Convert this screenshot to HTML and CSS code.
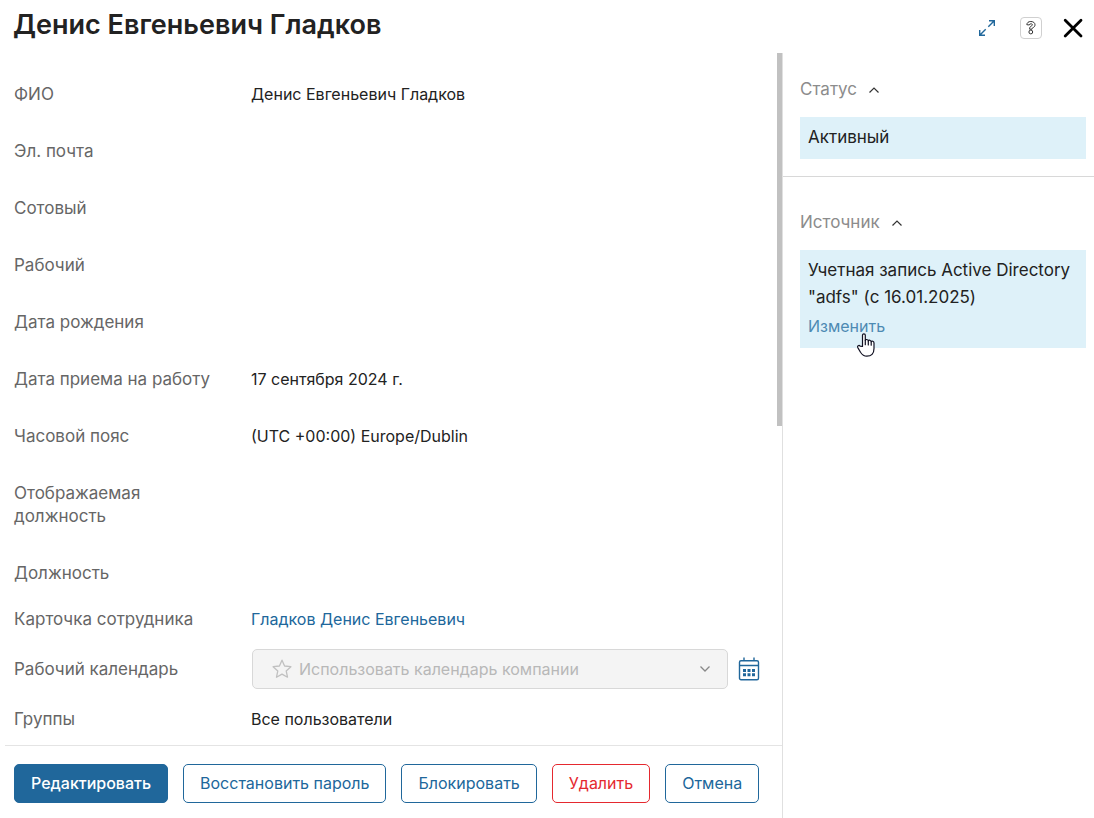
FILE: index.html
```html
<!DOCTYPE html>
<html lang="ru">
<head>
<meta charset="utf-8">
<meta name="viewport" content="width=device-width, initial-scale=1">
<title>Денис Евгеньевич Гладков</title>
<link rel="stylesheet" href="styles.css">
</head>
<body>
<div class="dialog">
  <header class="header">
    <h1 class="title">Денис Евгеньевич Гладков</h1>
    <div class="tools">
      <button class="tool" type="button" aria-label="Развернуть">
        <svg width="18" height="18" viewBox="0 0 18 18" fill="none" stroke="#20679b" stroke-width="1.4"><path d="M10.3 7.700 16 2M11 1.700h5.300v5.300M7.700 10.300 2 16M1.700 11v5.300h5.300"/></svg>
      </button>
      <button class="tool tool-help" type="button" aria-label="Справка">
        <svg width="12" height="16" viewBox="0 0 12 16" fill="#fff" stroke="#333" stroke-width="1"><path d="M1.800 4.700C2 2.600 3.500 1.500 5.800 1.500c2.500 0 4.200 1.300 4.200 3.300 0 1.500-.8 2.300-2.200 3-.6.300-.8.600-.8 1.400H4.600c0-1.700.3-2.400 1.700-3.200.8-.4 1.100-.7 1.100-1.200 0-.7-.6-1-1.500-1S4.500 4.300 4.300 5z"/><circle cx="5.800" cy="12" r="1.900"/></svg>
      </button>
      <button class="tool" type="button" aria-label="Закрыть">
        <svg width="20" height="20" viewBox="0 0 20 20" fill="none" stroke="#000" stroke-width="2.800" stroke-linecap="round"><path d="M2.200 2.200 18 18M18 2.200 2.200 18"/></svg>
      </button>
    </div>
  </header>

  <div class="columns">
    <main class="main">
      <div class="content">
        <dl class="fields">
          <div class="field"><dt>ФИО</dt><dd>Денис Евгеньевич Гладков</dd></div>
          <div class="field"><dt>Эл. почта</dt><dd></dd></div>
          <div class="field"><dt>Сотовый</dt><dd></dd></div>
          <div class="field"><dt>Рабочий</dt><dd></dd></div>
          <div class="field"><dt>Дата рождения</dt><dd></dd></div>
          <div class="field"><dt>Дата приема на работу</dt><dd>17 сентября 2024 г.</dd></div>
          <div class="field"><dt>Часовой пояс</dt><dd>(UTC +00:00) Europe/Dublin</dd></div>
          <div class="field"><dt>Отображаемая<br>должность</dt><dd></dd></div>
          <div class="field"><dt>Должность</dt><dd></dd></div>
        </dl>
        <dl class="fields fields-compact">
          <div class="field"><dt>Карточка сотрудника</dt><dd><a class="link" href="#">Гладков Денис Евгеньевич</a></dd></div>
          <div class="field">
            <dt><label for="calendar">Рабочий календарь</label></dt>
            <dd class="calendar">
              <span class="picker">
                <select id="calendar" class="select" disabled><option>Использовать календарь компании</option></select>
                <svg class="picker-star" width="20" height="20" viewBox="0 0 20 20" fill="none" stroke="#c0c0c0" stroke-width="1.300" stroke-linejoin="round"><path d="M10 1.200 12.600 7 18.900 7.700 14.200 11.900 15.500 18.200 10 15.100 4.500 18.200 5.800 11.900 1.100 7.700 7.400 7z"/></svg>
                <svg class="picker-arrow" width="12" height="8" viewBox="0 0 12 8" fill="none" stroke="#888" stroke-width="1.300"><path d="M1.500 1.500 6 6l4.500-4.500"/></svg>
              </span>
              <button class="tool" type="button" aria-label="Открыть календарь">
                <svg width="22" height="24" viewBox="0 0 22 24" fill="none" stroke="#20679b" stroke-width="1.400"><rect x="1.500" y="3.700" width="19" height="19" rx="1.500"/><path d="M1.500 8.500h19M6 .5v3.500M16 .5v3.500"/><path d="M5 13.500h3M9.500 13.500h3M14 13.500h3M5 17.700h3M9.500 17.700h3M14 17.700h3" stroke-width="3"/></svg>
              </button>
            </dd>
          </div>
          <div class="field"><dt>Группы</dt><dd>Все пользователи</dd></div>
        </dl>
      </div>
      <div class="scroll-thumb"></div>
      <footer class="actions">
        <button class="btn btn-primary" type="button">Редактировать</button>
        <button class="btn" type="button">Восстановить пароль</button>
        <button class="btn" type="button">Блокировать</button>
        <button class="btn btn-danger" type="button">Удалить</button>
        <button class="btn" type="button">Отмена</button>
      </footer>
    </main>

    <aside class="side">
      <section class="panel">
        <button class="panel-toggle" type="button" aria-expanded="true">Статус
          <svg width="12" height="8" viewBox="0 0 12 8" fill="none" stroke="#333" stroke-width="1.200"><path d="M1.500 6.500 6 2l4.500 4.500"/></svg>
        </button>
        <div class="card">Активный</div>
      </section>
      <section class="panel">
        <button class="panel-toggle" type="button" aria-expanded="true">Источник
          <svg width="12" height="8" viewBox="0 0 12 8" fill="none" stroke="#333" stroke-width="1.200"><path d="M1.500 6.500 6 2l4.500 4.500"/></svg>
        </button>
        <div class="card">
          <p class="card-text">Учетная запись Active Directory "adfs" (с 16.01.2025)</p>
          <a class="card-link" href="#">Изменить</a>
        </div>
      </section>
    </aside>
  </div>

  <svg class="pointer" width="18" height="24" viewBox="0 0 18 24" fill="#fff" stroke="#111122" stroke-width="1.200" stroke-linejoin="round" stroke-linecap="round"><path d="M5.500 13.500V2.300C5.500.4 8.300.4 8.300 2.300V7.500C8.700 6 11.200 6.200 11.300 8c.5-1.300 2.800-1 2.900.7.600-1 2.800-.7 2.800 1.200V15.500c0 5-2.700 7.700-7.200 7.700-3.300 0-4.600-1.300-6.300-4L.8 14.600c-.8-1.700 1.200-2.800 2.300-1.500z"/><path d="M8.300 7.500v4.200M11.300 8v3.900M14.200 8.700v3.500"/></svg>
</div>
</body>
</html>
```

FILE: styles.css
```css
* {
  box-sizing: border-box;
}

body {
  margin: 0;
  background: #fff;
  color: #222;
  font-family: Inter, "Liberation Sans", sans-serif;
  font-size: 16px;
  line-height: 23px;
}

button {
  font: inherit;
  cursor: pointer;
}

.dialog {
  position: relative;
  display: flex;
  flex-direction: column;
  min-height: 100vh;
}

.header {
  display: flex;
  justify-content: space-between;
  height: 53px;
  padding: 8px 11px 0 13px;
}

.title {
  margin: 0;
  font-size: 27px;
  font-weight: 600;
  line-height: 34px;
}

.tools {
  display: flex;
  align-items: center;
  gap: 21px;
  height: 40px;
}

.tool {
  display: flex;
  padding: 0;
  border: 0;
  background: none;
}

.tool-help {
  margin-left: 3px;
  padding: 2px 4px;
  border: 1px solid #d0d0d0;
  border-radius: 4px;
}

.columns {
  flex: 1;
  display: grid;
  grid-template-columns: minmax(0, 1fr) 312px;
}

.main {
  position: relative;
  display: flex;
  flex-direction: column;
}

.content {
  flex: 1;
  display: flex;
  flex-direction: column;
  gap: 14px;
  padding: 30px 22px 5px 14px;
}

.fields {
  display: grid;
  gap: 34px;
  margin: 0;
}

.fields-compact {
  gap: 10px;
}

.field {
  display: grid;
  grid-template-columns: 220px minmax(0, 1fr);
  column-gap: 17px;
  align-items: center;
}

.fields-compact .field {
  min-height: 40px;
}

.field dt {
  color: #666;
  font-size: 17px;
}

.field dd {
  margin: 0;
}

.link {
  color: #20679b;
  text-decoration: none;
}

.calendar {
  display: flex;
  align-items: center;
  gap: 10px;
  padding-left: 1px;
}

.picker {
  flex: 1;
  position: relative;
}

.select {
  display: block;
  width: 100%;
  height: 40px;
  padding: 0 40px 0 46px;
  border: 1px solid #d8d8d8;
  border-radius: 5px;
  background: #f4f4f4;
  color: #b8b8b8;
  font: inherit;
  appearance: none;
  opacity: 1;
}

.picker-star {
  position: absolute;
  top: 10px;
  left: 20px;
}

.picker-arrow {
  position: absolute;
  top: 16px;
  right: 17px;
}

.scroll-thumb {
  position: absolute;
  top: 0;
  right: 0;
  width: 5px;
  height: 373px;
  background: #c1c1c1;
}

.actions {
  display: flex;
  gap: 15px;
  margin-left: 5px;
  padding: 18px 9px 15px;
  border-top: 1px solid #e4e4e4;
}

.btn {
  height: 39px;
  padding: 0 16px;
  border: 1px solid #20679b;
  border-radius: 5px;
  background: #fff;
  color: #20679b;
  white-space: nowrap;
}

.btn-primary {
  background: #20679b;
  color: #fff;
  font-weight: 500;
}

.btn-danger {
  border-color: #e5292f;
  color: #e5292f;
}

.side {
  border-left: 1px solid #e0e0e0;
}

.panel {
  padding: 25px 8px 17px 17px;
}

.panel + .panel {
  padding-top: 34px;
  border-top: 1px solid #d8d8d8;
}

.panel-toggle {
  display: flex;
  align-items: center;
  gap: 11px;
  padding: 0;
  border: 0;
  background: none;
  color: #8c8c8c;
  font-size: 17px;
}

.card {
  margin-top: 16px;
  padding: 7px 8px 8px;
  background: #def1f9;
  font-size: 17px;
  line-height: 27px;
}

.card-text {
  margin: 0;
}

.card-link {
  display: block;
  padding-top: 2px;
  color: #4d8ab3;
  font-size: 16px;
  text-decoration: none;
}

.pointer {
  position: absolute;
  top: 333px;
  left: 857px;
}
```
